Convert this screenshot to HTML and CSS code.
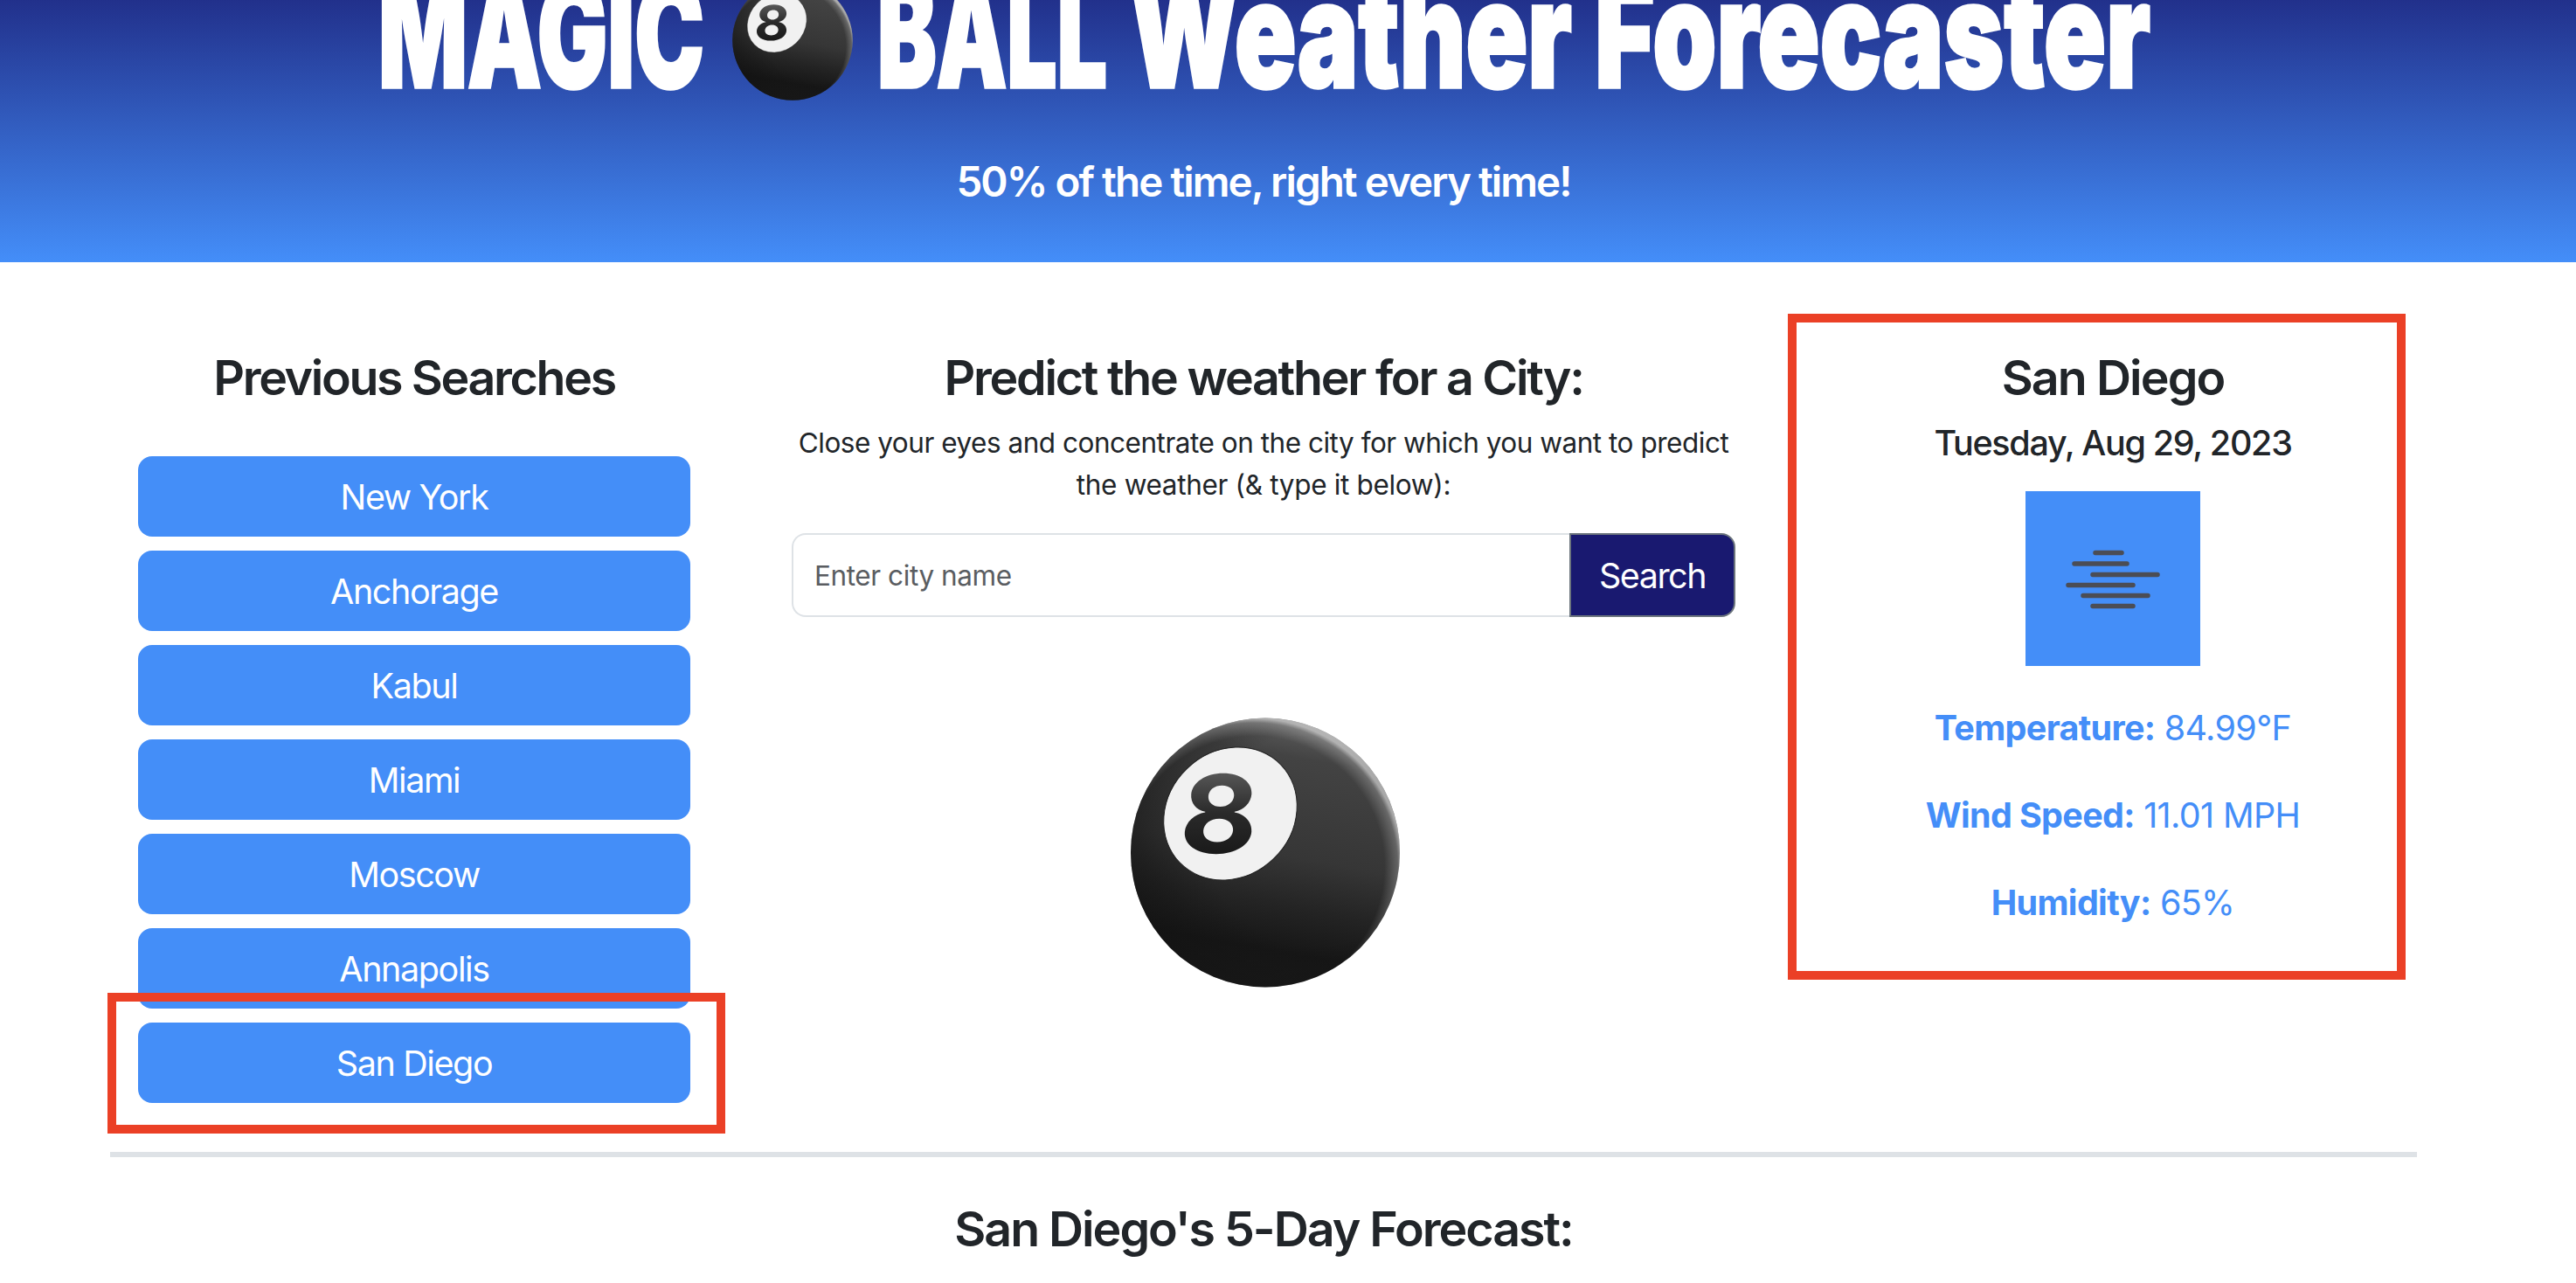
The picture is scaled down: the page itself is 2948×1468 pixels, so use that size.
FILE: index.html
```
<!DOCTYPE html>
<html lang="en">
<head>
<meta charset="utf-8">
<title>Magic 8 Ball Weather Forecaster</title>
<link rel="stylesheet" href="styles.css">
</head>
<body>
<svg class="defs" width="0" height="0" aria-hidden="true">
  <defs>
    <linearGradient id="body" x1="0.6" y1="0" x2="0.42" y2="1">
      <stop offset="0" stop-color="#606060"/>
      <stop offset="0.14" stop-color="#434343"/>
      <stop offset="0.5" stop-color="#363636"/>
      <stop offset="0.68" stop-color="#242424"/>
      <stop offset="0.85" stop-color="#161616"/>
      <stop offset="1" stop-color="#1a1a1a"/>
    </linearGradient>
    <radialGradient id="shade" cx="0.68" cy="0.45" r="0.72">
      <stop offset="0.55" stop-color="#111" stop-opacity="0"/>
      <stop offset="1" stop-color="#111" stop-opacity="0.6"/>
    </radialGradient>
    <radialGradient id="rim" cx="0.46" cy="0.55" r="0.548">
      <stop offset="0.88" stop-color="#fff" stop-opacity="0"/>
      <stop offset="0.97" stop-color="#fff" stop-opacity="0.22"/>
      <stop offset="1" stop-color="#fff" stop-opacity="0.55"/>
    </radialGradient>
    <linearGradient id="digit" x1="0" y1="0" x2="0" y2="1">
      <stop offset="0.2" stop-color="#555"/>
      <stop offset="0.5" stop-color="#2a2a2a"/>
      <stop offset="0.9" stop-color="#151515"/>
    </linearGradient>
    <symbol id="ball" viewBox="0 0 308 309">
      <circle cx="154" cy="154.500" r="154" fill="url(#body)"/>
      <circle cx="154" cy="154.500" r="154" fill="url(#shade)"/>
      <circle cx="154" cy="154.500" r="154" fill="url(#rim)"/>
      <ellipse cx="114" cy="110" rx="80.500" ry="71.500" transform="rotate(-44 114 110)" fill="#f1f1f1" stroke="#222" stroke-width="1"/>
      <text class="ball-digit" transform="translate(98 154.500) skewX(-5) scale(1.1 1)" fill="url(#digit)" text-anchor="middle">8</text>
    </symbol>
  </defs>
</svg>

<header class="hero">
  <h1 class="hero-title">
    <svg width="2948" height="150" viewBox="0 0 2948 150">
      <g class="title-text">
        <text x="433" y="100" textLength="373" lengthAdjust="spacingAndGlyphs">MAGIC</text>
        <text x="1004" y="100" textLength="263" lengthAdjust="spacingAndGlyphs">BALL</text>
        <text x="1292" y="100" textLength="507" lengthAdjust="spacingAndGlyphs">Weather</text>
        <text x="1825" y="100" textLength="636" lengthAdjust="spacingAndGlyphs">Forecaster</text>
      </g>
      <use href="#ball" x="838" y="-23" width="138" height="138"/>
    </svg>
  </h1>
  <p class="tagline">50% of the time, right every time!</p>
</header>

<main class="page">
  <div class="columns">
    <section class="history">
      <h3 class="heading">Previous Searches</h3>
      <ul class="cities">
        <li class="city">New York</li>
        <li class="city">Anchorage</li>
        <li class="city">Kabul</li>
        <li class="city">Miami</li>
        <li class="city">Moscow</li>
        <li class="city">Annapolis</li>
        <li class="city city-marked">San Diego</li>
      </ul>
    </section>

    <section class="search">
      <h3 class="heading heading-search">Predict the weather for a City:</h3>
      <p class="intro">Close your eyes and concentrate on the city for which you want to predict<br><span class="intro-end">the weather (&amp; type it below):</span></p>
      <div class="field">
        <div class="field-input">Enter city name</div>
        <div class="field-button">Search</div>
      </div>
      <svg class="big-ball" width="308" height="309"><use href="#ball"/></svg>
    </section>

    <section class="current">
      <h3 class="heading heading-city">San Diego</h3>
      <h5 class="date">Tuesday, Aug 29, 2023</h5>
      <svg class="weather" width="200" height="200" viewBox="0 0 200 200">
        <g class="fog">
          <path d="M80 70.500H110M56 83H116M77 95.500H151M49 107.500H123M66 119.500H140M77 131.500H123"/>
        </g>
      </svg>
      <p class="stat"><b>Temperature:</b> <span>84.99°F</span></p>
      <p class="stat"><b>Wind Speed:</b> <span>11.01 MPH</span></p>
      <p class="stat"><b>Humidity:</b> <span>65%</span></p>
    </section>
  </div>
  <hr class="rule">
  <h3 class="heading heading-forecast">San Diego's 5-Day Forecast:</h3>
</main>
</body>
</html>
```
FILE: styles.css
```
*, *::after { box-sizing: border-box; }

body {
  margin: 0;
  height: 1468px;
  overflow: hidden;
  background: #fff;
  color: #212529;
  font-family: Inter, "Liberation Sans", sans-serif;
}

h1, h3, h5, p, ul { margin: 0; padding: 0; }

.defs { position: absolute; }

.hero {
  height: 300px;
  overflow: hidden;
  color: #fff;
  background: linear-gradient(to bottom, #191970 -75px, #448ef9 300px);
}
.hero-title { height: 150px; line-height: 0; }
.title-text text {
  fill: #fff;
  stroke: #fff;
  stroke-width: 3.5px;
  font-size: 170px;
  font-weight: 900;
}
.ball-digit { font-size: 124px; font-weight: 700; }

.tagline {
  margin-top: 29px;
  padding-right: 56px;
  text-align: center;
  font-size: 47.5px;
  font-weight: 570;
  line-height: 58px;
  letter-spacing: -1.93px;
}

.page { padding: 98px 182px 0 126px; }
.columns { display: flex; align-items: flex-start; }

.heading {
  text-align: center;
  font-size: 55.5px;
  font-weight: 570;
  line-height: 67px;
  letter-spacing: -2.35px;
}
.heading-search { letter-spacing: -2.25px; }
.heading-city { letter-spacing: -1.9px; }
.heading-forecast { letter-spacing: -2.03px; margin-top: 48px; }

.history { width: 696px; padding: 0 32px; }
.cities {
  display: flex;
  flex-direction: column;
  gap: 16px;
  margin-top: 57px;
  list-style: none;
}
.city {
  height: 92px;
  border-radius: 16px;
  background: #448ef8;
  color: #fff;
  text-align: center;
  font-size: 39.5px;
  font-weight: 430;
  line-height: 94px;
  letter-spacing: -1.4px;
}
.city-marked { position: relative; }
.city-marked::after {
  content: "";
  position: absolute;
  left: -35px;
  top: -34px;
  width: 707px;
  height: 161px;
  border: 10px solid #eb4026;
}

.search { flex: 1; padding: 0 84px; }
.intro {
  margin-top: 18px;
  text-align: center;
  white-space: nowrap;
  font-size: 31.5px;
  line-height: 48px;
  letter-spacing: -0.48px;
}
.intro-end { letter-spacing: -0.33px; }
.field { display: flex; height: 96px; margin-top: 31px; }
.field-input {
  flex: 1;
  padding-left: 24px;
  border: 2px solid #dee2e6;
  border-right: 0;
  border-radius: 16px 0 0 16px;
  color: #5a5d61;
  font-size: 31.5px;
  line-height: 94px;
  letter-spacing: -0.42px;
}
.field-button {
  width: 190px;
  border: 2px solid #6c757d;
  border-radius: 0 16px 16px 0;
  background: #191970;
  color: #fff;
  text-align: center;
  font-size: 39.5px;
  line-height: 94px;
  letter-spacing: -1.5px;
}
.big-ball { display: block; margin: 115px auto 0; transform: translateX(2px); }

.current {
  position: relative;
  display: flex;
  flex-direction: column;
  align-items: center;
  width: 696px;
}
.current::after {
  content: "";
  position: absolute;
  left: -24px;
  top: -39px;
  width: 707px;
  height: 762px;
  border: 10px solid #eb4026;
}
.date {
  margin-top: 18px;
  font-size: 39.5px;
  font-weight: 550;
  line-height: 48px;
  letter-spacing: -1.3px;
}
.weather { margin-top: 31px; background: #448ef8; }
.fog path { stroke: #4b4d55; stroke-width: 5.5px; stroke-linecap: round; }
.stat {
  position: relative;
  top: 1px;
  margin-top: 40px;
  color: #448ef8;
  font-size: 39.5px;
  line-height: 60px;
  letter-spacing: -0.65px;
}
.stat b { font-weight: 700; letter-spacing: -0.68px; }

.rule {
  height: 6px;
  margin: 56px 0 0;
  border: 0;
  background: #dee2e6;
}
```
